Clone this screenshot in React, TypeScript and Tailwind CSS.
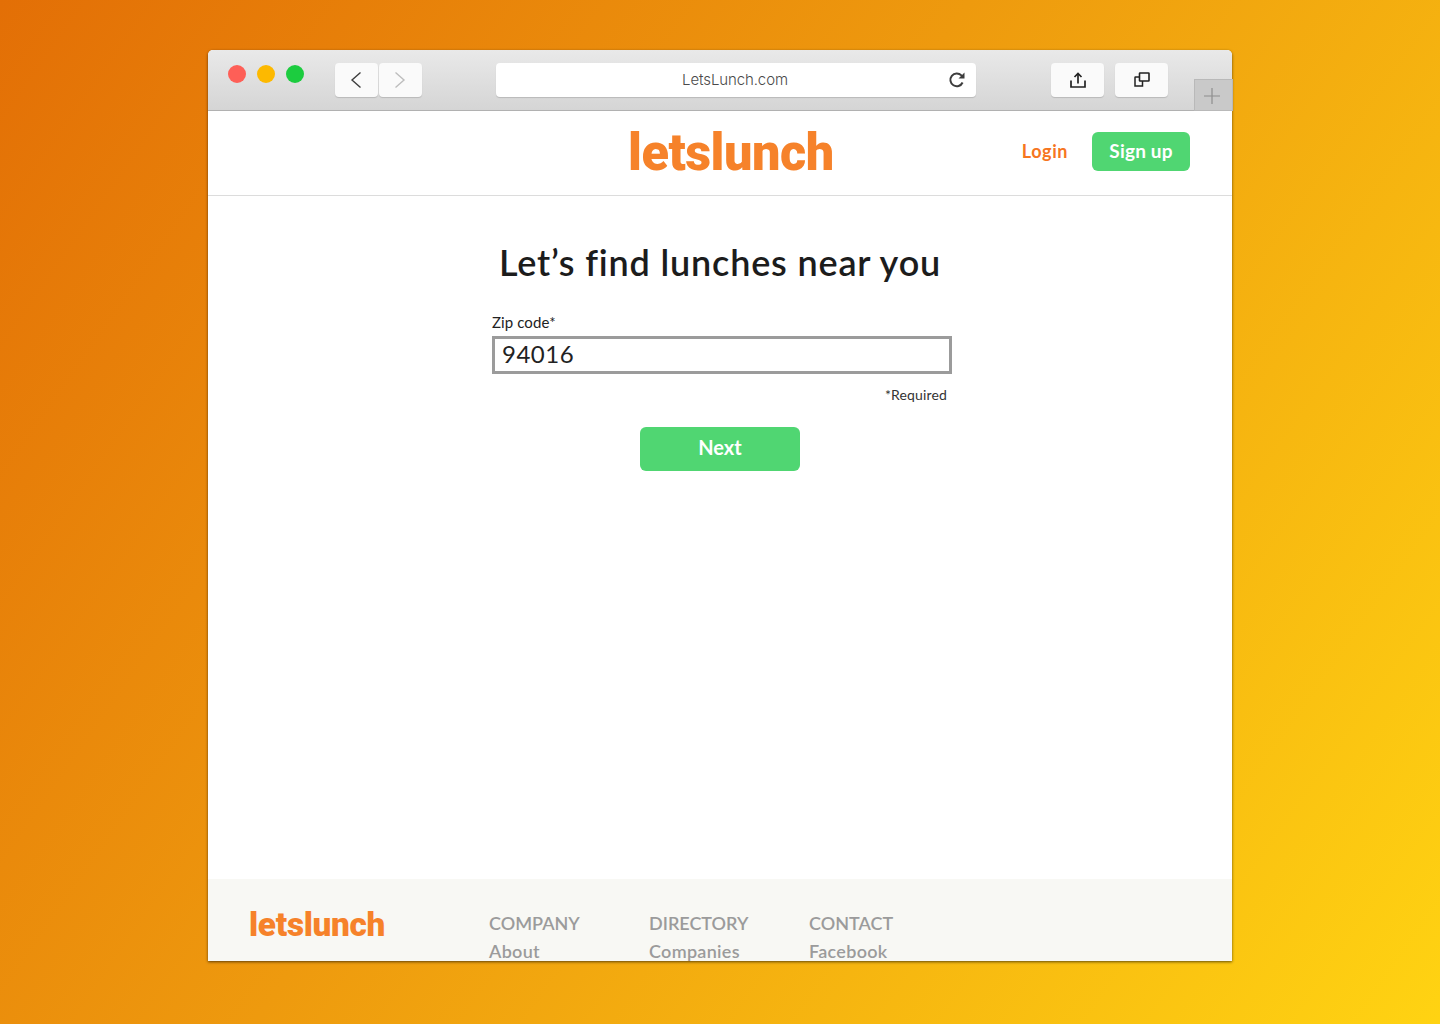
import React from 'react';

const uiFont = "font-['Lato','Noto_Sans',sans-serif]";

const Logo: React.FC<{ large?: boolean }> = ({ large }) => (
  <span
    className={
      large
        ? "inline-block origin-left scale-x-[0.97] font-['Roboto',sans-serif] text-[52px] leading-[52px] font-black tracking-[-0.5px] text-[#f6822a]"
        : "inline-block origin-left scale-x-[0.98] font-['Roboto',sans-serif] text-[34px] leading-[34px] font-black tracking-[-0.3px] text-[#f6822a]"
    }
  >
    letslunch
  </span>
);

const ToolbarButton: React.FC<{ className: string; children: React.ReactNode }> = ({ className, children }) => (
  <div className={`flex h-[34px] items-center justify-center rounded-[4px] bg-[#fafafa] shadow-[0_1px_1px_rgba(0,0,0,0.15)] ${className}`}>
    {children}
  </div>
);

const FooterColumn: React.FC<{ title: string; link: string }> = ({ title, link }) => (
  <div className="w-[160px] shrink-0 text-[18px] leading-[28px] font-semibold text-[#9b9b9b]">
    <div>{title}</div>
    <div className="tracking-[0.3px]">{link}</div>
  </div>
);

export default function App() {
  return (
    <div className={`h-[1024px] overflow-hidden bg-[linear-gradient(125deg,#e36f06_0%,#ee9a0e_45%,#ffd312_100%)] px-[208px] pt-[50px] ${uiFont}`}>
      <div className="relative flex h-[911px] flex-col rounded-t-[5px] bg-white shadow-[0_1px_3px_rgba(0,0,0,0.6)]">
        {/* Browser chrome */}
        <div className="flex h-[61px] shrink-0 items-start rounded-t-[5px] border-b border-[#b1b1b1] bg-[linear-gradient(180deg,#e9e9e9,#d5d5d5)] pt-[13px]">
          <div className="ml-[20px] flex gap-[11px] pt-[2px]">
            <span className="size-[18px] rounded-full bg-[#fe5f57]" />
            <span className="size-[18px] rounded-full bg-[#fdb900]" />
            <span className="size-[18px] rounded-full bg-[#1ccc3f]" />
          </div>
          <div className="ml-[31px] flex gap-px">
            <ToolbarButton className="w-[43px] pr-[2px]">
              <svg width="12" height="18" viewBox="0 0 12 18" fill="none" stroke="#3d3d3d" strokeWidth="1.4">
                <path d="M10.5 1.5 2 9l8.5 7.5" />
              </svg>
            </ToolbarButton>
            <ToolbarButton className="w-[43px] pr-[2px]">
              <svg width="12" height="18" viewBox="0 0 12 18" fill="none" stroke="#bdbdbd" strokeWidth="1.4">
                <path d="M1.5 1.5 10 9l-8.5 7.5" />
              </svg>
            </ToolbarButton>
          </div>
          <ToolbarButton className="relative ml-[74px] w-[480px] bg-white pr-[2px]">
            <span className="font-['Inter',sans-serif] text-[15px] font-light tracking-[-0.1px] text-[#4a4a4a]">LetsLunch.com</span>
            <svg className="absolute right-[10px] top-[8px]" width="18" height="18" viewBox="0 0 18 18" fill="none" stroke="#3d3d3d" strokeWidth="2">
              <path d="M14.6 11.5A6.4 6.4 0 1 1 13.4 4.4L15.5 6.3" />
              <path d="M16.5 1.5v6h-6" fill="#3d3d3d" stroke="none" />
            </svg>
          </ToolbarButton>
          <ToolbarButton className="ml-[75px] w-[53px]">
            <svg width="18" height="18" viewBox="0 0 18 18" fill="none" stroke="#222" strokeWidth="1.7">
              <path d="M2 9.5V16h14V9.5" />
              <path d="M9 12.5V3" />
              <path d="M5.5 6 9 2.5 12.5 6" />
            </svg>
          </ToolbarButton>
          <ToolbarButton className="ml-[11px] w-[53px]">
            <svg width="18" height="18" viewBox="0 0 18 18" fill="none" stroke="#222" strokeWidth="1.6">
              <rect x="6.5" y="2" width="9.5" height="8" rx="0.5" />
              <path d="M6.5 6H2.5a.5.5 0 0 0-.5.5V15h7.5v-5" strokeWidth="1.5" />
            </svg>
          </ToolbarButton>
        </div>

        {/* New tab button hangs over the chrome corner */}
        <div className="absolute right-[-1px] top-[29px] flex h-[32px] w-[39px] items-center justify-center border border-[#b9b9b9] bg-[#c9c9c9] pt-[2px] pr-[4px]">
          <svg width="16" height="16" viewBox="0 0 16 16" stroke="#8e8e8e" strokeWidth="1.2">
            <path d="M8 0v16M0 8h16" />
          </svg>
        </div>

        {/* Page */}
        <div className="flex min-h-0 flex-1 flex-col overflow-hidden">
          <header className="relative flex h-[85px] shrink-0 items-center border-b border-[#dcdcdc] pr-[42px] pb-[4px]">
            <div className="ml-[420px] mt-[4px] w-[394px]">
              <Logo large />
            </div>
            <a className="text-[18px] font-bold tracking-[0.6px] text-[#f6761f]">Login</a>
            <a className="ml-[24px] flex h-[39px] w-[98px] items-center justify-center rounded-[6px] bg-[#50d672] pt-[1px] text-[19px] font-bold tracking-[0.2px] text-white">
              Sign up
            </a>
          </header>

          <main className="flex flex-1 flex-col items-center">
            <h1 className="mt-[43px] text-[36px] leading-[46px] font-semibold tracking-[0.83px] text-[#1c1c1c]">Let’s find lunches near you</h1>
            <div className="mt-[27px] w-[460px] translate-x-[2px]">
              <label className="block text-[15px] leading-[20px] tracking-[0.1px] text-[#222]">Zip code*</label>
              <div className="mt-[4px] flex h-[38px] w-[460px] items-center border-[3px] border-[#9b9b9b] pb-[3px] pl-[7px] text-[24px] tracking-[0.5px] text-[#222]">
                94016
              </div>
              <div className="mt-[11px] pr-[5px] text-right text-[14px] leading-[20px] tracking-[0.15px] text-[#333]">*Required</div>
            </div>
            <button className="mt-[22px] h-[44px] w-[160px] rounded-[6px] bg-[#50d672] pb-[5px] text-[20px] font-bold text-white">
              Next
            </button>
          </main>

          <footer className="flex h-[82px] shrink-0 items-start overflow-hidden bg-[#f8f8f4] pt-[30px] pl-[41px]">
            <div className="w-[240px] shrink-0 -mt-[2px]">
              <Logo />
            </div>
            <FooterColumn title="COMPANY" link="About" />
            <FooterColumn title="DIRECTORY" link="Companies" />
            <FooterColumn title="CONTACT" link="Facebook" />
          </footer>
        </div>
      </div>
    </div>
  );
}
